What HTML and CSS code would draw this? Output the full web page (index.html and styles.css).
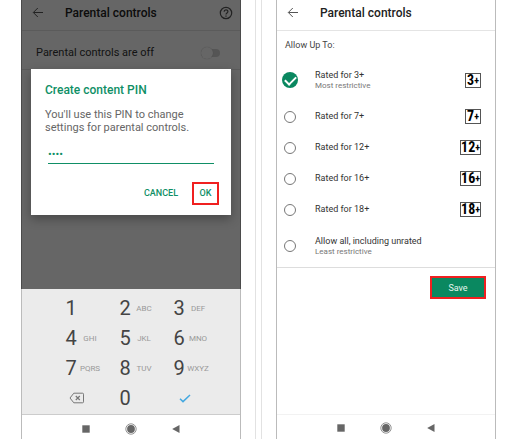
FILE: index.html
```html
<!DOCTYPE html>
<html lang="en">

<head>
    <meta charset="utf-8">
    <meta name="viewport" content="width=device-width, initial-scale=1.0">
    <title>Parental controls</title>
    <link rel="stylesheet" href="styles.css">
</head>

<body>
    <main class="screens">
        <section class="panel panel-pin">
            <div class="phone">
                <div class="screen">
                    <header class="topbar">
                        <button class="icon-btn" aria-label="Back">
                            <svg width="12" height="12" viewBox="0 0 12 12" fill="none" stroke="currentColor"><path d="M11 5.5H1.5M5.8 1L1.3 5.5 5.8 10" /></svg>
                        </button>
                        <h1>Parental controls</h1>
                        <button class="icon-btn" aria-label="Help">
                            <svg width="14" height="14" viewBox="0 0 14 14" fill="none" stroke="currentColor" stroke-width="1.2"><circle cx="7" cy="7" r="5.7" /><path d="M5.1 5.7C5.1 3.2 8.9 3.2 8.9 5.6C8.9 7 7 7 7 8.6M7 9.6V10.8" /></svg>
                        </button>
                    </header>
                    <div class="toggle-row">
                        <label for="parental">Parental controls are off</label>
                        <input type="checkbox" class="switch" id="parental">
                    </div>
                    <div class="backdrop">
                        <form class="dialog">
                            <h2>Create content PIN</h2>
                            <label for="pin">You'll use this PIN to change settings for parental controls.</label>
                            <input type="password" class="pin" id="pin" value="1234">
                            <div class="actions">
                                <button type="button">CANCEL</button>
                                <button type="button" class="marked">OK</button>
                            </div>
                        </form>
                    </div>
                </div>
                <div class="keypad">
                    <button><b>1</b><span></span></button>
                    <button><b>2</b><span>ABC</span></button>
                    <button><b>3</b><span>DEF</span></button>
                    <button><b>4</b><span>GHI</span></button>
                    <button><b>5</b><span>JKL</span></button>
                    <button><b>6</b><span>MNO</span></button>
                    <button><b>7</b><span>PQRS</span></button>
                    <button><b>8</b><span>TUV</span></button>
                    <button><b>9</b><span>WXYZ</span></button>
                    <button class="key-icon" aria-label="Delete">
                        <svg width="16" height="12" viewBox="0 0 16 12" fill="none" stroke="#777"><path d="M4.8 1.2H13.5Q14.5 1.2 14.5 2.2V9.8Q14.5 10.8 13.5 10.8H4.8L1 6Z" /><path d="M6.8 4L10.8 8M10.8 4L6.8 8" stroke-width="1.2" /></svg>
                    </button>
                    <button><b>0</b><span></span></button>
                    <button class="key-icon" aria-label="Done">
                        <svg width="12" height="9" viewBox="0 0 12 9" fill="none" stroke="#44a8e0" stroke-width="1.5"><path d="M1 4.8L4 7.6 11 1" /></svg>
                    </button>
                </div>
                <nav class="navbar">
                    <button aria-label="Recent apps"><svg width="12" height="12" viewBox="0 0 12 12" fill="#666"><path d="M2.3 2.3H9.7V9.7H2.3Z" /></svg></button>
                    <button aria-label="Home"><svg width="12" height="12" viewBox="0 0 12 12" fill="#666"><circle cx="6" cy="6" r="3.9" /><circle cx="6" cy="6" r="5.2" fill="none" stroke="#777" stroke-width=".8" /></svg></button>
                    <button aria-label="Back"><svg width="12" height="12" viewBox="0 0 12 12" fill="#666"><path d="M9.5 2V10L2.2 6Z" /></svg></button>
                </nav>
            </div>
        </section>

        <section class="panel panel-ratings">
            <div class="phone">
                <header class="topbar">
                    <button class="icon-btn" aria-label="Back">
                        <svg width="12" height="12" viewBox="0 0 12 12" fill="none" stroke="currentColor"><path d="M11 5.5H1.5M5.8 1L1.3 5.5 5.8 10" /></svg>
                    </button>
                    <h1>Parental controls</h1>
                </header>
                <form class="ratings">
                    <h2>Allow Up To:</h2>
                    <label class="rating tall">
                        <input type="radio" name="rating" checked>
                        <span class="name">Rated for 3+<small>Most restrictive</small></span>
                        <span class="badge">3<i>+</i></span>
                    </label>
                    <label class="rating">
                        <input type="radio" name="rating">
                        <span class="name">Rated for 7+</span>
                        <span class="badge">7<i>+</i></span>
                    </label>
                    <label class="rating">
                        <input type="radio" name="rating">
                        <span class="name">Rated for 12+</span>
                        <span class="badge">12<i>+</i></span>
                    </label>
                    <label class="rating">
                        <input type="radio" name="rating">
                        <span class="name">Rated for 16+</span>
                        <span class="badge">16<i>+</i></span>
                    </label>
                    <label class="rating">
                        <input type="radio" name="rating">
                        <span class="name">Rated for 18+</span>
                        <span class="badge">18<i>+</i></span>
                    </label>
                    <label class="rating tall">
                        <input type="radio" name="rating">
                        <span class="name">Allow all, including unrated<small>Least restrictive</small></span>
                    </label>
                    <div class="save-row">
                        <button type="button" class="save">Save</button>
                    </div>
                </form>
                <nav class="navbar">
                    <button aria-label="Recent apps"><svg width="12" height="12" viewBox="0 0 12 12" fill="#666"><path d="M2.3 2.3H9.7V9.7H2.3Z" /></svg></button>
                    <button aria-label="Home"><svg width="12" height="12" viewBox="0 0 12 12" fill="#666"><circle cx="6" cy="6" r="3.9" /><circle cx="6" cy="6" r="5.2" fill="none" stroke="#777" stroke-width=".8" /></svg></button>
                    <button aria-label="Back"><svg width="12" height="12" viewBox="0 0 12 12" fill="#666"><path d="M9.5 2V10L2.2 6Z" /></svg></button>
                </nav>
            </div>
        </section>
    </main>
</body>

</html>
```

FILE: styles.css
```css
* {
    box-sizing: border-box;
}

body {
    margin: 0;
    background: #fff;
    color: #444;
    font-family: Roboto, sans-serif;
    font-size: 9px;
}

h1,
h2 {
    margin: 0;
    font-weight: 500;
}

button {
    padding: 0;
    border: 0;
    background: none;
    color: inherit;
    font: inherit;
}

svg {
    display: block;
}

.screens {
    display: grid;
    grid-template-columns: 256fr 255fr;
    gap: 5px;
    min-height: 100vh;
}

.panel {
    display: flex;
}

.panel-pin {
    padding: 0 14px 0 21px;
    border-right: 1px solid #e2e2e2;
}

.panel-ratings {
    padding: 0 20px 0 14px;
    border-left: 1px solid #e2e2e2;
}

.phone {
    flex: 1;
    display: flex;
    flex-direction: column;
    border: solid #bbb;
    border-width: 0 1px;
}

.topbar {
    display: flex;
    align-items: center;
    height: 31px;
    padding: 0 7px 4px 10px;
    border-bottom: 1px solid #e4e4e4;
}

.topbar h1 {
    flex: 1;
    padding-left: 21px;
    color: #222;
    font-size: 12px;
    line-height: 16px;
}

.icon-btn {
    color: #555;
}

/* PIN screen */

.screen {
    position: relative;
    flex: 1;
}

.toggle-row {
    display: flex;
    align-items: center;
    justify-content: space-between;
    height: 39px;
    padding: 5px 20px 0 14px;
    border-bottom: 1px solid #e4e4e4;
    color: #333;
    font-size: 11px;
}

.switch {
    appearance: none;
    display: flex;
    align-items: center;
    width: 19px;
    height: 8px;
    margin: 0;
    border-radius: 4px;
    background: #d4d4d4;
}

.switch::before {
    content: "";
    width: 12px;
    height: 12px;
    border-radius: 50%;
    background: #fff;
    box-shadow: 0 0 1px #aaa;
}

.backdrop {
    position: absolute;
    inset: 0 -1px;
    padding: 69px 10px 0;
    background: rgba(0, 0, 0, .6);
}

.dialog {
    display: flex;
    flex-direction: column;
    height: 146px;
    padding: 13px 8px 10px 14px;
    background: #fff;
    box-shadow: 0 4px 10px rgba(0, 0, 0, .3);
    color: #666;
    font-size: 11px;
    line-height: 13px;
}

.dialog h2 {
    margin-bottom: 10px;
    color: #0f8f66;
    font-size: 12px;
    line-height: 16px;
}

.pin {
    height: 22px;
    margin: 8px 9px 0 3px;
    padding: 4px 0 0;
    border: 0;
    border-bottom: 1px solid #0f8f66;
    outline: 0;
    color: #0f8f66;
    font: 11px Roboto, sans-serif;
}

.actions {
    display: flex;
    justify-content: flex-end;
    gap: 14px;
    margin: auto 4px 0 0;
    color: #0f8f66;
    font-size: 9px;
    font-weight: 500;
}

.marked {
    width: 27px;
    height: 23px;
    border: 2px solid #f02020;
}

.keypad {
    display: grid;
    grid-template-columns: repeat(3, 1fr);
    grid-auto-rows: 30px;
    padding: 4px 16px 1px 40px;
    border-bottom: 1px solid #ccc;
    background: #ebebeb;
}

.keypad button {
    display: flex;
    align-items: center;
}

.keypad b {
    width: 18px;
    color: #444;
    font-size: 20px;
    font-weight: 400;
    text-align: center;
}

.keypad span {
    display: flex;
    justify-content: center;
    width: 20px;
    color: #999;
    font-size: 8px;
}

.keypad .key-icon {
    padding-left: 7px;
}

.keypad .key-icon:last-child {
    padding-left: 9px;
}

.navbar {
    display: flex;
    align-items: center;
    justify-content: center;
    gap: 33px;
    height: 24px;
    padding-top: 4px;
}

.panel-ratings .navbar {
    padding-top: 2px;
}

/* ratings screen */

.ratings {
    flex: 1;
    border-bottom: 1px solid #f2f2f2;
}

.ratings h2 {
    padding-left: 8px;
    font-size: 9px;
    font-weight: 400;
    line-height: 28px;
}

.rating {
    display: flex;
    align-items: center;
    height: 31px;
    padding: 0 14px 0 6px;
    color: #333;
}

.rating.tall {
    height: 42px;
}

.rating input {
    appearance: none;
    display: flex;
    justify-content: center;
    width: 12px;
    height: 12px;
    margin: 0 19px 0 1px;
    border: 1px solid #777;
    border-radius: 50%;
}

.rating input:checked {
    width: 16px;
    height: 16px;
    margin: 0 17px 0 -1px;
    border: 0;
    background: #0a8860;
}

.rating input:checked::before {
    content: "";
    width: 5px;
    height: 9px;
    margin-top: 2px;
    border: solid #fff;
    border-width: 0 2px 2px 0;
    transform: rotate(45deg);
}

.rating .name {
    flex: 1;
    line-height: 11px;
}

.rating small {
    display: block;
    color: #777;
    font-size: 8px;
    line-height: 10px;
}

.badge {
    min-width: 16px;
    border: 1px solid #555;
    color: #000;
    font: bold 14px/13px "Liberation Sans Narrow", "Roboto Condensed", Roboto, sans-serif;
    text-align: center;
}

.badge i {
    font-size: 10px;
    font-style: normal;
    vertical-align: 1px;
}

.save-row {
    display: flex;
    justify-content: flex-end;
    padding: 8px 9px 0 0;
    border-top: 1px solid #ddd;
}

.save {
    width: 56px;
    height: 23px;
    border: 2px solid #f02020;
    background: #0a8860;
    color: #e4f5ee;
}
```
